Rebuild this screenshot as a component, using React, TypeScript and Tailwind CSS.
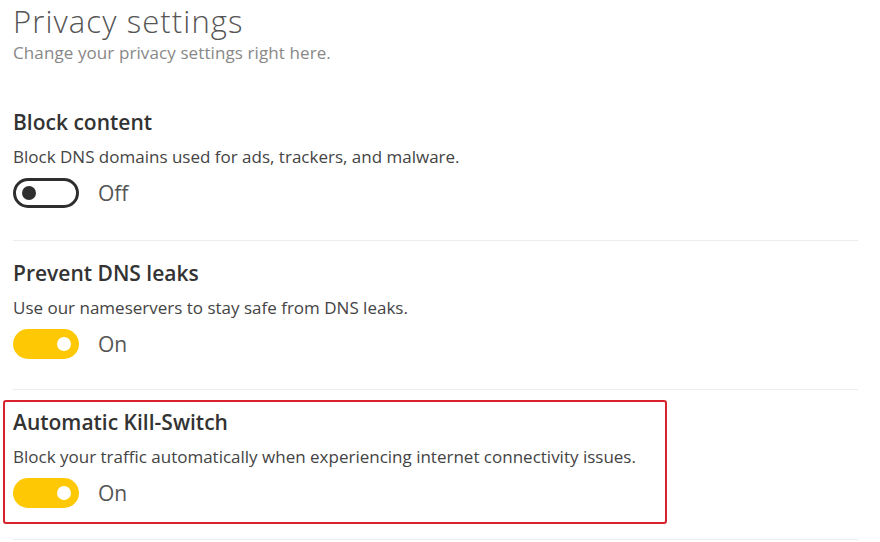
import React from "react";

function Toggle({ on }: { on: boolean }) {
  if (on) {
    return (
      <div className="relative w-[66px] h-[30px] rounded-full bg-[#ffc805] shrink-0">
        <div className="absolute right-[8px] top-[8px] w-[14px] h-[14px] rounded-full bg-white" />
      </div>
    );
  }
  return (
    <div className="relative w-[66px] h-[30px] rounded-full border-[3px] border-[#2e2e2e] shrink-0">
      <div className="absolute left-[6px] top-[5px] w-[14px] h-[14px] rounded-full bg-[#2e2e2e]" />
    </div>
  );
}

function Setting({
  title,
  desc,
  on,
}: {
  title: string;
  desc: string;
  on: boolean;
}) {
  return (
    <div className="flex flex-col">
      <div className="text-[21px] leading-[28px] font-semibold text-[#333]">{title}</div>
      <div className="mt-[9px] text-[17px] leading-[24px] text-[#444]">{desc}</div>
      <div className="mt-[9px] flex items-center gap-[19px]">
        <Toggle on={on} />
        <span className="text-[21px] leading-[28px] text-[#555]">{on ? "On" : "Off"}</span>
      </div>
    </div>
  );
}

export default function App() {
  return (
    <div
      className="w-[880px] h-[542px] bg-white overflow-hidden pl-[13px] pr-[22px] pt-[1px]"
      style={{ fontFamily: '"Open Sans", "Noto Sans", sans-serif' }}
    >
      <div className="text-[31px] leading-[40px] font-light text-[#555] tracking-[1.1px]">Privacy settings</div>
      <div className="text-[17px] leading-[24px] text-[#888] tracking-[0.1px]">
        Change your privacy settings right here.
      </div>

      <div className="mt-[43px] pb-[32px] border-b border-[#ececec]">
        <Setting
          title="Block content"
          desc="Block DNS domains used for ads, trackers, and malware."
          on={false}
        />
      </div>

      <div className="pt-[18px] pb-[30px] border-b border-[#ececec]">
        <Setting
          title="Prevent DNS leaks"
          desc="Use our nameservers to stay safe from DNS leaks."
          on={true}
        />
      </div>

      <div className="pt-[10px] pb-[15px] border-b border-[#ececec]">
        <div className="-ml-[10px] w-[664px] border-2 border-[#d8222c] rounded-[3px] pl-[8px] pt-[6px] pb-[14px]">
          <Setting
            title="Automatic Kill-Switch"
            desc="Block your traffic automatically when experiencing internet connectivity issues."
            on={true}
          />
        </div>
      </div>
    </div>
  );
}
